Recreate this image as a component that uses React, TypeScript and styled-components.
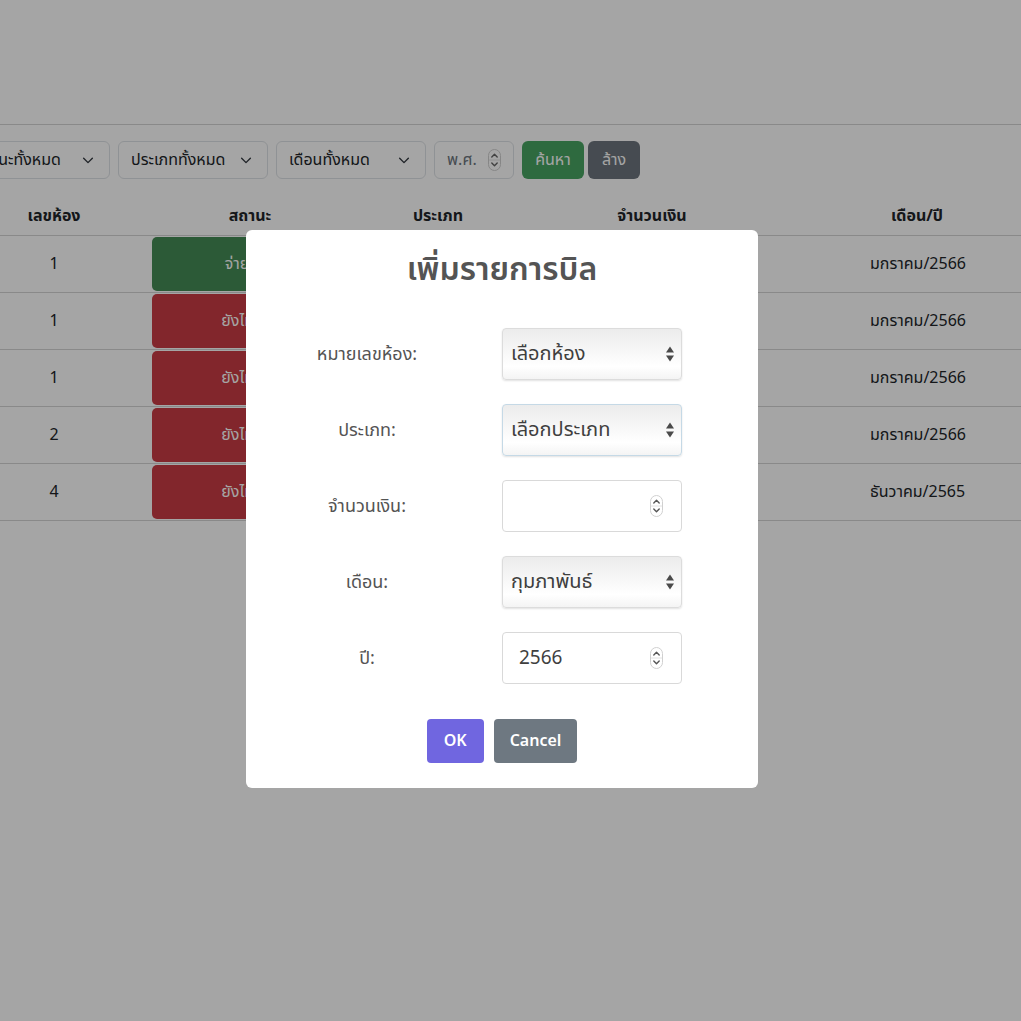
import React from "react";
import styled, { createGlobalStyle } from "styled-components";

const Global = createGlobalStyle`
  html, body { margin: 0; padding: 0; background: #fff; overflow: hidden; }
  body { font-family: "Noto Sans Thai", "Noto Sans", "DejaVu Sans", sans-serif; color: #212529; }
  * { box-sizing: border-box; }
`;

const Page = styled.div`
  width: 1200px;
  margin-left: -40px;
`;

const TopBar = styled.div`
  height: 125px;
  border-bottom: 1px solid #d4d4d4;
`;

const Filters = styled.div`
  display: flex;
  align-items: center;
  gap: 8px;
  padding-top: 16px;
  height: 54px;
`;

const FilterSelect = styled.div<{ $w: number }>`
  width: ${(p) => p.$w}px;
  height: 38px;
  border: 1px solid #dee2e6;
  border-radius: 6px;
  display: flex;
  align-items: center;
  justify-content: space-between;
  padding: 0 14px 0 12px;
  font-size: 16px;
  color: #212529;
`;

const YearBox = styled(FilterSelect)`
  color: #6c757d;
  padding-right: 12px;
`;

const BtnGroup = styled.div`
  display: flex;
  gap: 4px;
`;

const FilterBtn = styled.div<{ $bg: string; $w: number }>`
  width: ${(p) => p.$w}px;
  height: 38px;
  border-radius: 6px;
  background: ${(p) => p.$bg};
  color: #fff;
  display: flex;
  align-items: center;
  justify-content: center;
  font-size: 16px;
`;

const Table = styled.div`
  margin-top: 16px;
  display: grid;
  grid-template-columns: 188px 204px 172px 256px 400px;
`;

const HeadCell = styled.div`
  height: 41px;
  padding-top: 1px;
  display: flex;
  align-items: center;
  justify-content: center;
  font-weight: 700;
  font-size: 16px;
  border-bottom: 1px solid #d4d4d4;
`;

const MonthHead = styled(HeadCell)`
  justify-content: flex-start;
  padding-left: 111px;
`;

const Cell = styled.div`
  height: 57px;
  display: flex;
  align-items: center;
  justify-content: center;
  font-size: 16px;
  border-bottom: 1px solid #d4d4d4;
`;

const MonthCell = styled(Cell)`
  justify-content: flex-start;
  padding-left: 90px;
`;

const StatusCell = styled(Cell)`
  align-items: flex-start;
  padding: 1px 4px 0;
`;

const Status = styled.div<{ $paid: boolean }>`
  width: 100%;
  height: 54px;
  border-radius: 5px;
  background: ${(p) => (p.$paid ? "#458b55" : "#c93c44")};
  color: #fff;
  display: flex;
  align-items: center;
  justify-content: center;
  font-size: 16px;
`;

const Backdrop = styled.div`
  position: fixed;
  inset: 0;
  background: rgba(0, 0, 0, 0.353);
  display: flex;
  align-items: center;
  justify-content: center;
  padding-right: 17px;
  padding-bottom: 3px;
`;

const Popup = styled.div`
  width: 512px;
  background: #fff;
  border-radius: 6px;
  padding: 0 0 25px;
  display: flex;
  flex-direction: column;
  align-items: center;
`;

const Title = styled.h2`
  margin: 0;
  padding: 16px 16px 0;
  font-size: 32px;
  font-weight: 600;
  color: #545454;
  text-align: center;
`;

const Form = styled.div`
  align-self: stretch;
  margin-top: 34px;
  padding-left: 21px;
  display: grid;
  grid-template-columns: 200px 180px;
  column-gap: 35px;
  row-gap: 24px;
`;

const Label = styled.div`
  height: 52px;
  display: flex;
  align-items: center;
  justify-content: center;
  font-size: 18px;
  color: #545454;
`;

const SelectBox = styled.div<{ $focus?: boolean }>`
  height: 52px;
  border: 1px solid ${(p) => (p.$focus ? "#c5d9e6" : "#dcdcdc")};
  border-radius: 4px;
  background: linear-gradient(#ececec 0%, #f6f6f6 40%, #ffffff 75%, #f4f4f4 100%);
  box-shadow: 0 1px 2px rgba(0, 0, 0, 0.12);
  display: flex;
  align-items: center;
  justify-content: space-between;
  padding: 0 6px 0 8px;
  font-size: 20px;
  color: #3f3f3f;
`;

const NumberBox = styled.div`
  height: 52px;
  border: 1px solid #d9d9d9;
  border-radius: 4px;
  background: #fff;
  display: flex;
  align-items: center;
  justify-content: space-between;
  padding: 0 18px 0 16px;
  font-size: 19px;
  color: #3f3f3f;
`;

const Actions = styled.div`
  margin-top: 35px;
  display: flex;
  gap: 10px;
`;

const ActionBtn = styled.button<{ $bg: string }>`
  height: 44px;
  padding: 0 17px;
  border: 0;
  border-radius: 4px;
  background: ${(p) => p.$bg};
  color: #fff;
  font-family: inherit;
  font-size: 16px;
  font-weight: 600;
`;

const CancelBtn = styled(ActionBtn)`
  padding: 0 16px;
`;

const Chevron = () => (
  <svg width="14" height="14" viewBox="0 0 16 16" fill="none">
    <path d="M3 6l5 5 5-5" stroke="#343a40" strokeWidth="1.6" strokeLinecap="round" strokeLinejoin="round" />
  </svg>
);

const UpDown = () => (
  <svg width="10" height="18" viewBox="0 0 10 18">
    <path d="M5 1.5L9 7.5H1z" fill="#4a4a4a" />
    <path d="M5 16.5L9 10.5H1z" fill="#4a4a4a" />
  </svg>
);

const Spin = ({ c = "#555" }: { c?: string }) => (
  <svg width="13" height="22" viewBox="0 0 13 22" fill="none">
    <rect x="0.5" y="0.5" width="12" height="21" rx="6" stroke="#d0d0d0" />
    <line x1="1" y1="11" x2="12" y2="11" stroke="#e2e2e2" />
    <path d="M3.8 8l2.7-2.7L9.2 8" stroke={c} strokeWidth="1.4" strokeLinecap="round" strokeLinejoin="round" />
    <path d="M3.8 14l2.7 2.7L9.2 14" stroke={c} strokeWidth="1.4" strokeLinecap="round" strokeLinejoin="round" />
  </svg>
);

const rows = [
  { room: "1", paid: true, month: "มกราคม/2566" },
  { room: "1", paid: false, month: "มกราคม/2566" },
  { room: "1", paid: false, month: "มกราคม/2566" },
  { room: "2", paid: false, month: "มกราคม/2566" },
  { room: "4", paid: false, month: "ธันวาคม/2565" },
];

export default function App() {
  return (
    <>
      <Global />
      <Page>
        <TopBar />
        <Filters>
          <FilterSelect $w={150}>
            สถานะทั้งหมด <Chevron />
          </FilterSelect>
          <FilterSelect $w={150}>
            ประเภททั้งหมด <Chevron />
          </FilterSelect>
          <FilterSelect $w={150}>
            เดือนทั้งหมด <Chevron />
          </FilterSelect>
          <YearBox $w={80}>
            พ.ศ. <Spin c="#666" />
          </YearBox>
          <BtnGroup>
            <FilterBtn $bg="#48a462" $w={62}>ค้นหา</FilterBtn>
            <FilterBtn $bg="#6c757d" $w={52}>ล้าง</FilterBtn>
          </BtnGroup>
        </Filters>
        <Table>
          <HeadCell>เลขห้อง</HeadCell>
          <HeadCell>สถานะ</HeadCell>
          <HeadCell>ประเภท</HeadCell>
          <HeadCell>จำนวนเงิน</HeadCell>
          <MonthHead>เดือน/ปี</MonthHead>
          {rows.map((r, i) => (
            <React.Fragment key={i}>
              <Cell>{r.room}</Cell>
              <StatusCell>
                <Status $paid={r.paid}>{r.paid ? "จ่ายแล้ว" : "ยังไม่จ่าย"}</Status>
              </StatusCell>
              <Cell />
              <Cell />
              <MonthCell>{r.month}</MonthCell>
            </React.Fragment>
          ))}
        </Table>
      </Page>
      <Backdrop>
        <Popup>
          <Title>เพิ่มรายการบิล</Title>
          <Form>
            <Label>หมายเลขห้อง:</Label>
            <SelectBox>
              เลือกห้อง <UpDown />
            </SelectBox>
            <Label>ประเภท:</Label>
            <SelectBox $focus>
              เลือกประเภท <UpDown />
            </SelectBox>
            <Label>จำนวนเงิน:</Label>
            <NumberBox>
              <span />
              <Spin />
            </NumberBox>
            <Label>เดือน:</Label>
            <SelectBox>
              กุมภาพันธ์ <UpDown />
            </SelectBox>
            <Label>ปี:</Label>
            <NumberBox>
              2566 <Spin />
            </NumberBox>
          </Form>
          <Actions>
            <ActionBtn $bg="#7066e0">OK</ActionBtn>
            <CancelBtn $bg="#6e7881">Cancel</CancelBtn>
          </Actions>
        </Popup>
      </Backdrop>
    </>
  );
}
